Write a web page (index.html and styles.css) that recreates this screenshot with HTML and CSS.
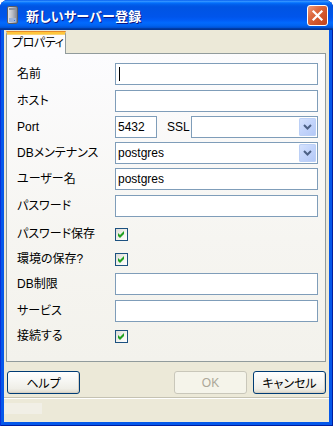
FILE: index.html
```html
<!DOCTYPE html>
<html lang="ja">
<head>
<meta charset="utf-8">
<title>新しいサーバー登録</title>
<link rel="stylesheet" href="styles.css">
</head>
<body>
<div class="window">
  <div class="titlebar">
    <svg class="appicon" width="11" height="18" viewBox="0 0 11 18">
      <defs>
        <linearGradient id="srv" x1="0" y1="0" x2="1" y2="0">
          <stop offset="0" stop-color="#e8e8ec"/>
          <stop offset="0.5" stop-color="#b9bcc4"/>
          <stop offset="1" stop-color="#7d808a"/>
        </linearGradient>
      </defs>
      <rect x="0.5" y="0.5" width="10" height="17" rx="1.5" fill="url(#srv)" stroke="#5a5d66"/>
      <rect x="2" y="2" width="7" height="2" fill="#8e929c"/>
      <rect x="2" y="12" width="7" height="4" fill="#9fb4d8"/>
      <rect x="7" y="14" width="1" height="1" fill="#3a6fd0"/>
    </svg>
    <span class="title">新しいサーバー登録</span>
    <div class="close">
      <svg width="19" height="19" viewBox="0 0 19 19">
        <path d="M5.5 5.5 L13.5 13.5 M13.5 5.5 L5.5 13.5" stroke="#fff" stroke-width="2.2" stroke-linecap="square"/>
      </svg>
    </div>
  </div>
  <div class="client">
    <div class="tabs"><div class="tab">プロパティ</div></div>
    <div class="panel">
      <div class="form">
        <span class="label">名前</span>
        <div class="input"><span class="caret"></span></div>

        <span class="label">ホスト</span>
        <div class="input"></div>

        <span class="label">Port</span>
        <div class="portrow">
          <div class="input port">5432</div>
          <span class="ssl">SSL</span>
          <div class="combo ssl-combo"><span class="value"></span><span class="drop"><svg width="17" height="18" viewBox="0 0 17 18"><path d="M5 7 L8.5 10.5 L12 7" fill="none" stroke="#4d6185" stroke-width="2"/></svg></span></div>
        </div>

        <span class="label">DBメンテナンス</span>
        <div class="combo"><span class="value">postgres</span><span class="drop"><svg width="17" height="18" viewBox="0 0 17 18"><path d="M5 7 L8.5 10.5 L12 7" fill="none" stroke="#4d6185" stroke-width="2"/></svg></span></div>

        <span class="label">ユーザー名</span>
        <div class="input">postgres</div>

        <span class="label">パスワード</span>
        <div class="input"></div>

        <span class="label">パスワード保存</span>
        <div class="check"><svg width="11" height="11" viewBox="0 0 11 11"><polygon points="2,4 4,6 8,2 8,5 4,9 2,7" fill="#21a121"/></svg></div>

        <span class="label">環境の保存?</span>
        <div class="check"><svg width="11" height="11" viewBox="0 0 11 11"><polygon points="2,4 4,6 8,2 8,5 4,9 2,7" fill="#21a121"/></svg></div>

        <span class="label">DB制限</span>
        <div class="input"></div>

        <span class="label">サービス</span>
        <div class="input"></div>

        <span class="label">接続する</span>
        <div class="check"><svg width="11" height="11" viewBox="0 0 11 11"><polygon points="2,4 4,6 8,2 8,5 4,9 2,7" fill="#21a121"/></svg></div>
      </div>
    </div>
    <div class="buttons">
      <div class="btn">ヘルプ</div>
      <div class="spacer"></div>
      <div class="btn disabled">OK</div>
      <div class="btn">キャンセル</div>
    </div>
    <div class="status"><div class="pane"></div></div>
  </div>
</div>
</body>
</html>
```
FILE: styles.css
```css
* { box-sizing: border-box; }
html, body { margin: 0; padding: 0; background: #ffffff; }
body {
  font-family: "Liberation Sans", "Noto Sans CJK JP", sans-serif;
  font-size: 12px;
  font-feature-settings: "palt";
  color: #000;
}
.window {
  width: 333px;
  height: 426px;
  display: flex;
  flex-direction: column;
  background: #0558ea;
  border-radius: 8px 8px 0 0;
  overflow: hidden;
  box-shadow: inset 1px 0 0 #0831d9, inset -1px 0 0 #001ea0, inset 0 -1px 0 #001ea0;
}
.titlebar {
  height: 30px;
  flex: none;
  display: flex;
  align-items: center;
  padding: 0 5px 0 7px;
  background: linear-gradient(to bottom,
    #0058ee 0%, #3593ff 4%, #288eff 6%, #127dff 8%, #036ffc 10%,
    #0262ee 14%, #0057e5 20%, #0054e3 24%, #0055eb 56%, #005bf5 66%,
    #026afe 76%, #0062ef 86%, #0052d6 92%, #0040ab 94%, #003092 100%);
}
.appicon { flex: none; margin-top: -1px; }
.title {
  margin-left: 8px;
  color: #fff;
  font-weight: bold;
  font-size: 13px;
  text-shadow: 1px 1px 0 #0a1883;
  flex: 1;
  letter-spacing: 0.2px;
}
.close {
  width: 21px;
  height: 21px;
  border: 1px solid #fff;
  border-radius: 3px;
  background: linear-gradient(135deg, #ee9a7c 0%, #dd6a40 35%, #d0542a 65%, #c2431c 100%);
  display: flex;
  align-items: center;
  justify-content: center;
}
.client {
  flex: 1;
  margin: 0 4px 4px 4px;
  background: #ece9d8;
  display: flex;
  flex-direction: column;
  padding: 1px 3px 0 2px;
}
.tabs {
  height: 22px;
  display: flex;
  position: relative;
  z-index: 1;
}
.tab {
  width: 60px;
  height: 23px;
  background: #fcfcfe;
  border: 1px solid #919b9c;
  border-bottom: none;
  border-top: 3px solid #ffc73c;
  box-shadow: inset 0 1px 0 #f9d374;
  border-radius: 3px 3px 0 0;
  padding-left: 5px;
  line-height: 18px;
  white-space: nowrap;
  letter-spacing: -0.4px;
  position: relative;
}
.tab::before {
  content: "";
  position: absolute;
  left: -1px; right: -1px; top: -3px;
  height: 1px;
  background: #e68b2c;
  border-radius: 3px 3px 0 0;
}
.panel {
  height: 309px;
  width: 320px;
  border: 1px solid #919b9c;
  background: linear-gradient(to bottom, #fcfcfe 0%, #f6f5f1 60%, #f3f2ec 100%);
  padding: 9px 7px 0 10px;
}
.form {
  display: grid;
  grid-template-columns: 98px 1fr;
  grid-template-rows: 27px 26px 26px 26px 27px 28px 25px 25px 27px 25px 22px;
  align-items: start;
}
.label {
  line-height: 22px;
  height: 22px;
  white-space: nowrap;
}
.input {
  height: 22px;
  border: 1px solid #7f9db9;
  background: #fff;
  padding: 0 2px;
  line-height: 20px;
  display: flex;
  align-items: center;
}
.caret {
  width: 1px;
  height: 14px;
  background: #000;
  margin-left: 1px;
}
.portrow {
  display: flex;
  align-items: center;
  height: 22px;
}
.port { width: 42px; flex: none; }
.ssl { margin-left: 10px; width: 24px; flex: none; }
.combo {
  height: 22px;
  border: 1px solid #7f9db9;
  background: #fff;
  display: flex;
  align-items: center;
  padding: 1px;
}
.ssl-combo { flex: 1; }
.combo .value { flex: 1; padding-left: 1px; line-height: 18px; }
.drop {
  width: 17px;
  height: 18px;
  flex: none;
  border-radius: 2px;
  background: linear-gradient(135deg, #d8e4fd 0%, #c4d5fb 45%, #b2c7f6 100%);
  box-shadow: inset 0 0 0 1px #bcd0f6;
  display: flex;
}
.check {
  width: 13px;
  height: 13px;
  margin-top: 5px;
  border: 1px solid #1c5180;
  background: linear-gradient(135deg, #dcdcd7 0%, #f4f4f1 60%, #ffffff 100%);
  display: flex;
}
.buttons {
  margin-top: 9px;
  height: 23px;
  display: flex;
  padding-left: 1px;
  gap: 6px;
}
.spacer { flex: 1; }
.btn {
  width: 73px;
  height: 23px;
  border: 1px solid #003c74;
  border-radius: 3px;
  background: linear-gradient(to bottom, #ffffff 0%, #f7f7f4 40%, #efeee7 80%, #dcd8cb 100%);
  box-shadow: inset -1px -1px 0 #d6d0c5;
  display: flex;
  align-items: center;
  justify-content: center;
}
.btn.disabled {
  border-color: #c9c7ba;
  background: #f5f4ea;
  box-shadow: none;
  color: #aca899;
}
.status {
  margin-top: 3px;
  margin-left: -2px;
  margin-right: -3px;
  flex: 1;
  border-top: 1px solid #c5c2b2;
  box-shadow: inset 0 1px 0 #ffffff;
  padding: 5px 0 0 0;
}
.pane {
  width: 38px;
  height: 11px;
  background: #f1efe6;
}
```
